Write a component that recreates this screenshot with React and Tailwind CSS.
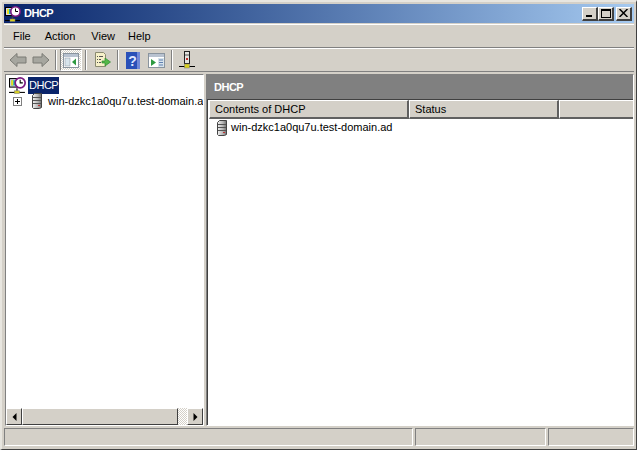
import React from 'react';

const font = { fontFamily: '"Liberation Sans", Arial, sans-serif' };

// Small server tower used in the tree and in the list
function ServerIcon({ className = '' }) {
  return (
    <svg width="12" height="16" viewBox="0 0 12 16" className={className}>
      <defs>
        <linearGradient id="srv" x1="0" x2="1" y1="0" y2="0">
          <stop offset="0" stopColor="#f2f2f2" />
          <stop offset="0.6" stopColor="#b5b5b5" />
          <stop offset="1" stopColor="#6e6e6e" />
        </linearGradient>
      </defs>
      <path d="M1.5 2.5 L3.5 0.5 H10.5 V14.5 L8.5 15.5 H2.5 L1.5 14.5 Z" fill="url(#srv)" stroke="#444" strokeWidth="1" />
      <path d="M2 4.5 H10 M2 7.5 H10 M2 10.5 H10" stroke="#555" strokeWidth="1" />
      <rect x="7" y="12" width="2" height="1" fill="#c03030" />
    </svg>
  );
}

// DHCP snap-in icon: monitor, clock and network line
function DhcpIcon({ size = 16 }) {
  return (
    <svg width={size} height={size} viewBox="0 0 16 16">
      <rect x="0.5" y="1.5" width="9" height="8" fill="#d8d8e8" stroke="#000" />
      <rect x="2" y="3" width="6" height="5" fill="#18b0c0" />
      <rect x="2" y="3" width="2" height="5" fill="#e8e020" />
      <circle cx="10.5" cy="5.5" r="4.7" fill="#fff" stroke="#7a1a80" strokeWidth="1.6" />
      <path d="M10.5 2.5 V5.5 H13" stroke="#000" fill="none" strokeWidth="1" />
      <path d="M0 14.5 H15" stroke="#000" />
      <path d="M7.5 10.5 V13" stroke="#444" strokeWidth="1.5" />
      <rect x="5" y="13" width="5" height="2.5" fill="#d8d020" stroke="#777" strokeWidth="0.5" />
    </svg>
  );
}

function ArrowIcon({ flip }) {
  return (
    <svg width="18" height="16" viewBox="0 0 18 16" style={flip ? { transform: 'scaleX(-1)' } : undefined}>
      <path d="M1 8 L8 1.5 V5 H17 V11 H8 V14.5 Z" fill="#a6a69f" stroke="#7a7a74" />
    </svg>
  );
}

function ConsoleTreeIcon() {
  return (
    <svg width="16" height="15" viewBox="0 0 16 15">
      <rect x="0.5" y="0.5" width="15" height="14" fill="#fff" stroke="#8a949e" />
      <rect x="1" y="1" width="14" height="3" fill="#b8c2d0" />
      <rect x="2" y="5" width="5" height="8" fill="#d8e4ec" stroke="#8a949e" strokeWidth="0.5" />
      <path d="M13 5.5 V12.5 L9 9 Z" fill="#2e9a40" />
    </svg>
  );
}

function ExportIcon() {
  return (
    <svg width="17" height="16" viewBox="0 0 17 16">
      <path d="M1.5 0.5 H9.5 L11.5 2.5 V14.5 H1.5 Z" fill="#f6f0c8" stroke="#8a8a70" />
      <path d="M3 4.5 H4 M5 4.5 H9 M3 7.5 H4 M5 7.5 H7 M3 10.5 H4 M5 10.5 H7" stroke="#555" />
      <path d="M8 9 H11 V6 L16.5 10 L11 14 V11 H8 Z" fill="#54b848" stroke="#2e8a30" strokeWidth="0.7" />
    </svg>
  );
}

function HelpIcon() {
  return (
    <svg width="14" height="17" viewBox="0 0 14 17">
      <rect width="14" height="17" fill="#2a50b8" />
      <rect x="11" width="3" height="17" fill="#7088d8" />
      <text x="6.5" y="14" fontSize="14" fontWeight="700" fill="#dfe6ff" textAnchor="middle" fontFamily="Liberation Sans">?</text>
    </svg>
  );
}

function PaneIcon() {
  return (
    <svg width="17" height="15" viewBox="0 0 17 15">
      <rect x="0.5" y="0.5" width="16" height="14" fill="#fff" stroke="#8a949e" />
      <rect x="1" y="1" width="15" height="3" fill="#b8c2d0" />
      <path d="M3 6 V13 L8 9.5 Z" fill="#2e9a40" />
      <rect x="10" y="5" width="6" height="9" fill="#d8e4ec" />
      <path d="M11 7 H15 M11 9.5 H15 M11 12 H15" stroke="#6080b0" />
    </svg>
  );
}

function ConnectIcon() {
  return (
    <svg width="16" height="18" viewBox="0 0 16 18">
      <rect x="5.5" y="0.5" width="5" height="12" fill="#e4e4e0" stroke="#222" />
      <path d="M6 4 H10" stroke="#555" />
      <rect x="7" y="7" width="2" height="2" fill="#c03030" />
      <path d="M0 15.5 H16" stroke="#000" />
      <rect x="5.5" y="13" width="5" height="4" fill="#d8d020" stroke="#777" strokeWidth="0.5" />
    </svg>
  );
}

function Sep({ className = '' }) {
  return <div className={`w-[2px] h-[20px] shrink-0 border-l border-[#808080] border-r-0 bg-white bg-clip-content ${className}`} />;
}

function CaptionButton({ children, className = '' }) {
  return (
    <button className={`w-[16px] h-[14px] flex items-center justify-center bg-[#d4d0c8] border-t border-l border-white border-r-2 border-b-2 border-r-[#404040] border-b-[#404040] ${className}`}>
      {children}
    </button>
  );
}

function ScrollButton({ dir }) {
  return (
    <div className="w-[16px] h-full shrink-0 flex items-center justify-center bg-[#d4d0c8] border-t border-l border-white border-r border-b border-r-[#404040] border-b-[#404040]">
      <svg width="5" height="8" viewBox="0 0 5 8">
        {dir === 'left' ? <path d="M4.5 0 V8 L0.5 4 Z" fill="#000" /> : <path d="M0.5 0 V8 L4.5 4 Z" fill="#000" />}
      </svg>
    </div>
  );
}

export default function App() {
  return (
    <div className="w-[637px] h-[450px] overflow-hidden flex flex-col bg-[#d4d0c8] text-[11px] text-black border-r border-b border-r-[#404040] border-b-[#404040] border-t-2 border-l-2 border-t-[#e8e6e0] border-l-[#e8e6e0] pl-[2px] pr-[2px] pt-[2px] pb-[3px]" style={font}>
      {/* Title bar */}
      <div className="h-[19px] shrink-0 flex items-center bg-gradient-to-r from-[#0a246a] to-[#a6caf0] pl-[1px] pr-[2px]">
        <DhcpIcon />
        <span className="ml-[3px] text-white font-bold text-[11px] tracking-[-0.5px]">DHCP</span>
        <div className="ml-auto flex items-center">
          <CaptionButton>
            <span className="w-[6px] h-[2px] bg-black mt-[6px] mr-[2px]" />
          </CaptionButton>
          <CaptionButton className="mr-[2px]">
            <span className="w-[10px] h-[9px] border border-black border-t-2" />
          </CaptionButton>
          <CaptionButton>
            <svg width="9" height="8" viewBox="0 0 9 8">
              <path d="M0.5 0 L8.5 8 M8.5 0 L0.5 8" stroke="#000" strokeWidth="1.5" />
            </svg>
          </CaptionButton>
        </div>
      </div>

      {/* Menu bar */}
      <div className="h-[24px] mt-[1px] shrink-0 flex items-center border-t border-t-white border-b border-b-[#808080] pl-[9px]">
        <span>File</span>
        <span className="ml-[14px]">Action</span>
        <span className="ml-[16px]">View</span>
        <span className="ml-[13px]">Help</span>
      </div>

      {/* Toolbar */}
      <div className="h-[24px] shrink-0 flex items-center border-t border-t-white border-b border-b-[#808080] pl-[5px]">
        <div className="flex items-center gap-[5px]">
          <ArrowIcon />
          <ArrowIcon flip />
        </div>
        <Sep className="ml-[5px]" />
        <div className="w-[22px] h-[22px] ml-[3px] shrink-0 flex items-center justify-center bg-[repeating-conic-gradient(#ffffff_0_25%,#d4d0c8_0_50%)] bg-[length:2px_2px] border border-t-[#808080] border-l-[#808080] border-r-white border-b-white">
          <ConsoleTreeIcon />
        </div>
        <Sep className="ml-[3px]" />
        <div className="ml-[7px] flex items-center"><ExportIcon /></div>
        <Sep className="ml-[6px]" />
        <div className="ml-[7px] flex items-center"><HelpIcon /></div>
        <div className="ml-[8px] flex items-center"><PaneIcon /></div>
        <Sep className="ml-[6px]" />
        <div className="ml-[6px] flex items-center"><ConnectIcon /></div>
      </div>

      {/* Panes */}
      <div className="flex-1 min-h-0 flex mt-[2px] gap-[2px] pb-[2px] pl-[1px]">
        {/* Tree */}
        <div className="w-[199px] shrink-0 flex flex-col bg-white border-t border-l border-t-[#808080] border-l-[#808080] border-r border-b border-r-white border-b-white">
          <div className="flex-1 min-h-0 overflow-hidden pl-[3px] pt-[2px]">
            <div className="flex items-center h-[17px]">
              <DhcpIcon size={17} />
              <span className="ml-[2px] bg-[#0a246a] text-white h-[17px] leading-[17px] px-[1px] tracking-[-0.5px]">DHCP</span>
            </div>
            <div className="flex items-center h-[14px] whitespace-nowrap">
              <span className="ml-[4px] w-[9px] h-[9px] shrink-0 border border-[#808080] flex items-center justify-center relative bg-white">
                <span className="absolute w-[5px] h-[1px] bg-black" />
                <span className="absolute w-[1px] h-[5px] bg-black" />
              </span>
              <ServerIcon className="ml-[9px] shrink-0" />
              <span className="ml-[5px]">win-dzkc1a0qu7u.test-domain.ad</span>
            </div>
          </div>
          <div className="h-[17px] shrink-0 flex bg-[#d4d0c8]">
            <ScrollButton dir="left" />
            <div className="flex-1 border-t border-l border-white border-r border-b border-r-[#404040] border-b-[#404040]" />
            <div className="w-[9px] bg-[repeating-conic-gradient(#ffffff_0_25%,#d4d0c8_0_50%)] bg-[length:2px_2px]" />
            <ScrollButton dir="right" />
          </div>
        </div>

        {/* Details */}
        <div className="flex-1 min-w-0 flex flex-col bg-white border-t border-l border-t-[#808080] border-l-[#808080] border-r border-b border-r-white border-b-white">
          <div className="h-[24px] shrink-0 flex items-center bg-[#808080] text-white font-bold pl-[7px] tracking-[-0.5px]">DHCP</div>
          <div className="flex-1 min-h-0 flex flex-col border-t border-l border-[#404040] pl-px">
            <div className="h-[19px] shrink-0 flex bg-[#d4d0c8]">
              <div className="w-[200px] pl-[5px] flex items-center border-t border-l border-white border-r-2 border-b-2 border-r-[#606060] border-b-[#606060]">Contents of DHCP</div>
              <div className="w-[150px] pl-[5px] flex items-center border-t border-l border-white border-r-2 border-b-2 border-r-[#606060] border-b-[#606060]">Status</div>
              <div className="flex-1 border-t border-l border-white border-b-2 border-b-[#606060]" />
            </div>
            <div className="flex items-center h-[17px] pl-[7px]">
              <ServerIcon />
              <span className="ml-[3px]">win-dzkc1a0qu7u.test-domain.ad</span>
            </div>
          </div>
        </div>
      </div>

      {/* Status bar */}
      <div className="h-[18px] shrink-0 flex gap-[2px]">
        <div className="w-[409px] border-t border-l border-t-[#808080] border-l-[#808080] border-r border-b border-r-white border-b-white" />
        <div className="w-[131px] border-t border-l border-t-[#808080] border-l-[#808080] border-r border-b border-r-white border-b-white" />
        <div className="flex-1 border-t border-l border-t-[#808080] border-l-[#808080] border-r border-b border-r-white border-b-white" />
      </div>
    </div>
  );
}
